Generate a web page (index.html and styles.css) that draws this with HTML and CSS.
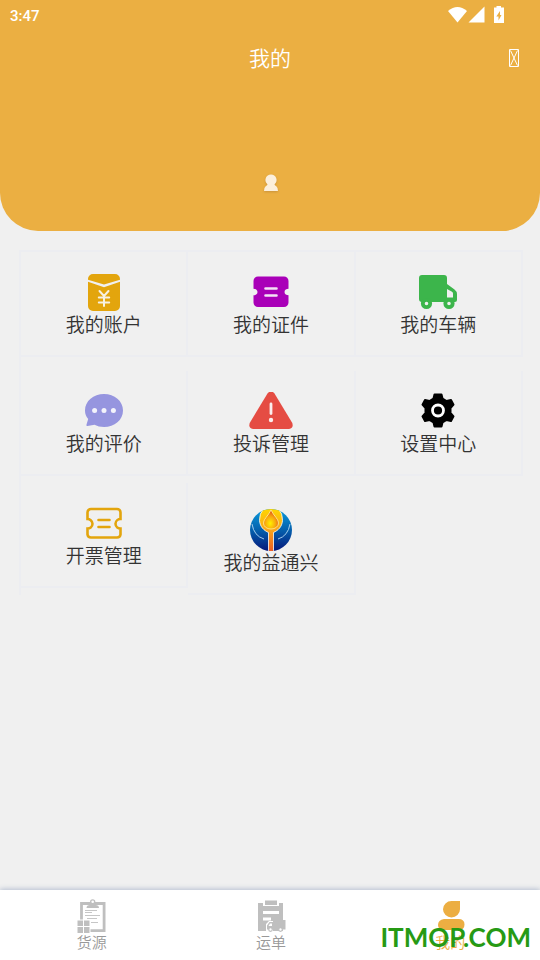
FILE: index.html
```html
<!DOCTYPE html>
<html lang="zh-CN">
<head>
<meta charset="utf-8">
<meta name="viewport" content="width=device-width, initial-scale=1">
<title>我的</title>
<link rel="stylesheet" href="styles.css">
</head>
<body>
<div class="app">
  <header class="hero">
    <div class="status">
      <span class="time">3:47</span>
      <svg class="status-icons" width="58" height="20" viewBox="0 0 58 20" fill="#fff" aria-hidden="true">
        <path d="M0 5Q9.500-3 19 5L9.500 16.500Z"/>
        <path d="M36.500 0.500V16.500H20.500Z"/>
        <path fill-rule="evenodd" d="M48.500 0h4.500v1.500h3V17h-10V1.500h2.500ZM52 5L48.300 10.500h2.200V14.500L53.500 9h-1.500Z"/>
      </svg>
    </div>
    <div class="titlebar">
      <h1>我的</h1>
      <button class="more" type="button" aria-label="更多">
        <svg width="10" height="20" viewBox="0 -2 10 20" fill="none" stroke="#fff" stroke-width="1" aria-hidden="true"><path d="M.5.5h9v17h-9ZM1.500 1.500l7 15M8.500 1.500l-7 15"/></svg>
      </button>
    </div>
    <div class="avatar">
      <svg width="16" height="18" viewBox="0 0 16 18" fill="#fcefdb" aria-hidden="true"><path d="M8 .5a5.500 5.500 0 0 1 3.600 9.700c0 1 .7 1.300 1.500 1.900q1.900 1.500 1.900 4.900H1q0-3.400 1.900-4.900c.8-.6 1.500-.9 1.500-1.900A5.500 5.500 0 0 1 8 .5Z"/></svg>
    </div>
  </header>

  <main class="menu">
    <a class="item" href="#account">
      <span class="icon"><svg width="34" height="38" viewBox="0 -1 34 38" aria-hidden="true"><path fill="#e3a50d" d="M6 0h22a5 5 0 0 1 5 5v.7L17 10.500 1 5.700V5a5 5 0 0 1 5-5ZM1 7.800l16 5.400 16-5.400V32a5 5 0 0 1-5 5H6a5 5 0 0 1-5-5Z"/><path fill="none" stroke="#f7f1e3" stroke-width="2" stroke-linecap="round" d="M12.500 17l4.500 5 4.500-5M17 22v10M11.800 23.500h10.400M11.800 28.500h10.400"/></svg></span>
      <span class="label">我的账户</span>
    </a>
    <a class="item" href="#licenses">
      <span class="icon"><svg width="36" height="38" viewBox="0 -1 36 38" aria-hidden="true"><path fill="#a900b8" d="M5 2.500h26a4.500 4.500 0 0 1 4.500 4.500v7.700c-2 0-4 1-4 3.300s2 3.300 4 3.300V28.500a4.500 4.500 0 0 1-4.500 4.500H5a4.500 4.500 0 0 1-4.500-4.500v-7.200c2 0 4-1 4-3.300S2.500 14.700.5 14.700V7A4.500 4.500 0 0 1 5 2.500Z"/><path stroke="#f3e2f5" stroke-width="2.600" stroke-linecap="round" d="M12.500 14.500h11M12.500 21.500h11"/></svg></span>
      <span class="label">我的证件</span>
    </a>
    <a class="item" href="#vehicles">
      <span class="icon"><svg width="38" height="38" viewBox="0 -1 38 38" aria-hidden="true"><path fill="#3cb54b" fill-rule="evenodd" d="M3 1h22q3 0 3 3v6l7.500 5.500q2.500 2 2.500 4.500v6q0 2-2 2H3q-3 0-3-3V4q0-3 3-3ZM28 15v8.500h6v-4q0-1-1-1.800Z"/><g fill="#f0f0f0" stroke="#3cb54b" stroke-width="3.800"><circle cx="7.500" cy="29.500" r="3.700"/><circle cx="30" cy="29.500" r="3.700"/></g></svg></span>
      <span class="label">我的车辆</span>
    </a>
    <a class="item drop-lg" href="#reviews">
      <span class="icon"><svg width="38" height="38" viewBox="0 -1 38 38" aria-hidden="true"><path fill="#9695df" d="M19 1c10.500 0 19 7 19 16.500S29.500 34 19 34q-5.500 0-9.500-2.200L2.500 33q-1.500.2-1-1.500L3.200 26Q0 22.500 0 17.500C0 8 8.500 1 19 1Z"/><g fill="#f3f3fb"><circle cx="9.600" cy="17.500" r="2.500"/><circle cx="19" cy="17.500" r="2.500"/><circle cx="28.400" cy="17.500" r="2.500"/></g></svg></span>
      <span class="label">我的评价</span>
    </a>
    <a class="item drop-lg" href="#complaints">
      <span class="icon"><svg width="44" height="38" viewBox="0 0 44 38" aria-hidden="true"><path fill="#e54c43" d="M18.500 1.500q3.500-4.500 7 0L43.300 31q1.500 5-3.300 6H4q-4.800-1-3.300-6Z"/><path stroke="#fbeeee" stroke-width="2.800" stroke-linecap="round" d="M22 12v9.500"/><circle cx="22" cy="28" r="2.200" fill="#fbeeee"/></svg></span>
      <span class="label">投诉管理</span>
    </a>
    <a class="item drop-lg" href="#settings">
      <span class="icon"><svg width="34" height="38" viewBox="0 0 34 38" aria-hidden="true"><path fill="#000" stroke="#000" stroke-width="2" stroke-linejoin="round" d="M13.500 2.500h7l1 4 4 2.500L30 8l2.500 4.700-3 3.400v4.800L32.500 24.300 30 29l-4.500-1-4 2.500-1 4h-7l-1-4-4-2.500L4 29l-2.500-4.700 3-3.400v-4.800L1.500 12.700 4 8l4.500 1 4-2.500Z"/><circle cx="17" cy="18.500" r="5.500" fill="#000" stroke="#fff" stroke-width="2.800"/></svg></span>
      <span class="label">设置中心</span>
    </a>
    <a class="item drop-sm" href="#invoices">
      <span class="icon"><svg width="36" height="38" viewBox="0 -1 36 38" fill="none" stroke="#e3a50d" stroke-width="2.600" aria-hidden="true"><path d="M5 4h26a3.500 3.500 0 0 1 3.500 3.500v6.500c-2 0-5 1.500-5 4.800s3 4.700 5 4.700v6a3.500 3.500 0 0 1-3.500 3H5a3.500 3.500 0 0 1-3.500-3V23.500c2 0 5-1.400 5-4.700s-3-4.800-5-4.800V7.500A3.500 3.500 0 0 1 5 4Z"/><path stroke-linecap="round" d="M12.500 15h11M12.500 22h11"/></svg></span>
      <span class="label">开票管理</span>
    </a>
    <a class="item drop-lg" href="#yitongxing">
      <span class="icon"><svg class="logo" width="42" height="42" viewBox="0 0 42 42" aria-hidden="true">
        <defs>
          <linearGradient id="blue" x1="0" y1="0" x2="0" y2="1"><stop offset="0" stop-color="#0a9bdc"/><stop offset=".5" stop-color="#0560ad"/><stop offset="1" stop-color="#06187b"/></linearGradient>
          <linearGradient id="stem" x1="0" y1="0" x2="0" y2="1"><stop offset="0" stop-color="#ffd800"/><stop offset=".5" stop-color="#f9a51b"/><stop offset="1" stop-color="#ee5a24"/></linearGradient>
          <radialGradient id="drop" cx=".45" cy=".7" r=".7"><stop offset="0" stop-color="#fff100"/><stop offset=".5" stop-color="#f8a80e"/><stop offset="1" stop-color="#dc441c"/></radialGradient>
          <clipPath id="disc"><circle cx="21" cy="21" r="21"/></clipPath>
        </defs>
        <g clip-path="url(#disc)">
          <path fill="url(#blue)" d="M0 0h42v42H0Z"/>
          <path fill="url(#stem)" stroke="#fff" stroke-width=".8" d="M14-1Q9 5 9.500 11.500C10 18 14 21.500 18.500 23.500V43h5V23.500C28 21.500 32 18 32.500 11.500Q33 5 28-1Z"/>
          <path fill="url(#drop)" stroke="#fff3a0" stroke-width=".8" d="M21 1q2 4 5 7.500c5.500 6.500.8 11.500-5 11.500s-10.500-5-5-11.500Q19 5 21 1Z"/>
          <path fill="none" stroke="#a5cdec" stroke-width="1" d="M2 15q2 12 12 15M40 15q-2 12-12 15"/>
        </g>
      </svg></span>
      <span class="label">我的益通兴</span>
    </a>
  </main>

  <nav class="tabs">
    <a class="tab" href="#goods">
      <svg width="30" height="35" viewBox="0 0 30 35" aria-hidden="true">
        <path fill="#fff" stroke="#bfbfbf" stroke-width="2.800" d="M4.500 4.500h22.600v27.100H4.500Z"/>
        <path fill="#bfbfbf" d="M9.500 9q0-3 3.500-3V3a2.700 2.700 0 0 1 5.400 0v3q3.600 0 3.600 3Z"/><circle cx="15.700" cy="2.800" r="1.300" fill="#fff"/>
        <path stroke="#c6c6c6" stroke-width="1" d="M8 11.500h12M8 13.500h7M8 16.500h15M10 19.500h10M14 23.500h7"/>
        <path fill="#fff" d="M0 20.500h13.500V35H0Z"/>
        <path fill="#bfbfbf" d="M.5 21.500h5.500V27H.5ZM7 21.500h5.500V27H7ZM.5 28h5.500v6H.5ZM7 28h5.500v6H7Z"/>
      </svg>
      <span>货源</span>
    </a>
    <a class="tab" href="#waybills">
      <svg width="30" height="35" viewBox="0 0 30 35" aria-hidden="true">
        <path fill="#bfbfbf" d="M2 4h5v3h16V4h4v28H2Z"/><path fill="#bfbfbf" d="M9 1.500h12v4.500H9Z"/>
        <path fill="#fff" d="M7 12h16v3H7ZM7 18.500h8v3H7ZM10 25l3-3h4v11h-7Z"/>
        <path fill="#bfbfbf" d="M17 21h12.500v9.500H11v-4l2.500-3.500H17Z"/>
        <path fill="#fff" d="M14 24.500h2V27h-3.500Z"/>
        <g fill="#fff" stroke="#bfbfbf" stroke-width="1.200"><circle cx="14.500" cy="30.500" r="1.800"/><circle cx="24.500" cy="30.500" r="1.800"/></g>
      </svg>
      <span>运单</span>
    </a>
    <a class="tab active" href="#mine" aria-current="page">
      <svg width="30" height="35" viewBox="0 0 30 35" fill="#ecae42" aria-hidden="true"><path d="M16.500 2H25v8.200A8.500 8.200 0 1 1 16.500 2ZM9 20h14.500q6 0 6 5.500T23.500 31H9q-6 0-6-5t6-6Z"/></svg>
      <span>我的</span>
    </a>
    <div class="watermark">ITMOP.COM</div>
  </nav>
</div>
</body>
</html>
```
FILE: styles.css
```css
* { box-sizing: border-box; }

body {
  margin: 0;
  background: #f0f0f0;
  color: #333;
  font-family: "Noto Sans CJK SC", sans-serif;
  font-weight: 350;
}

a { color: inherit; text-decoration: none; }
svg { display: block; flex: none; }

.app {
  display: flex;
  flex-direction: column;
  min-height: 100vh;
}

.hero {
  padding-bottom: 39px;
  border-radius: 0 0 38px 38px;
  background: #ebaf42;
  color: #fff;
}

.status {
  display: flex;
  align-items: center;
  justify-content: space-between;
  height: 32px;
  padding: 0 34px 0 10px;
}

.time {
  font: 500 15px/20px Roboto, sans-serif;
}

.titlebar {
  display: grid;
  grid-template-columns: 1fr auto 1fr;
  align-items: center;
  height: 50px;
  padding: 0 21px;
}

h1 {
  grid-column: 2;
  margin: 0;
  font-size: 21px;
  font-weight: 350;
  line-height: 30px;
}

.more {
  justify-self: end;
  padding: 0;
  border: 0;
  background: none;
}

.avatar {
  display: flex;
  justify-content: center;
  padding: 92px 0 0 2px;
  filter: drop-shadow(0 1px 1px #c9933a);
}

.menu {
  display: grid;
  grid-template-columns: repeat(3, 1fr);
  align-items: start;
  margin: 19px 17px 20px 19px;
  border-top: 2px solid #ecedf1;
  border-left: 2px solid #ecedf1;
}

.item {
  display: flex;
  flex-direction: column;
  align-items: center;
  height: 105px;
  padding-top: 19px;
  border-right: 2px solid #ecedf1;
  border-bottom: 2px solid #ecedf1;
}

.drop-lg { margin-top: 14px; }
.drop-sm { margin-top: 7px; }

.icon {
  display: flex;
  align-items: flex-end;
  justify-content: center;
  height: 40px;
}

.label {
  font-size: 19px;
  line-height: 26px;
}

.icon .logo { align-self: flex-start; }

.tabs {
  position: relative;
  display: grid;
  grid-template-columns: repeat(3, 1fr);
  height: 70px;
  margin-top: auto;
  padding-left: 2px;
  background: #fff;
  box-shadow: 0 -1px 5px #b4bed0;
}

.tab {
  display: flex;
  flex-direction: column;
  align-items: center;
  padding-top: 9px;
  color: #999;
  font-size: 15px;
  line-height: 16px;
}

.tab.active { color: #ecae42; }

.watermark {
  position: absolute;
  right: 9px;
  bottom: 5px;
  color: #269a14;
  font: 700 26px/36px Lato, sans-serif;
  pointer-events: none;
}
```
